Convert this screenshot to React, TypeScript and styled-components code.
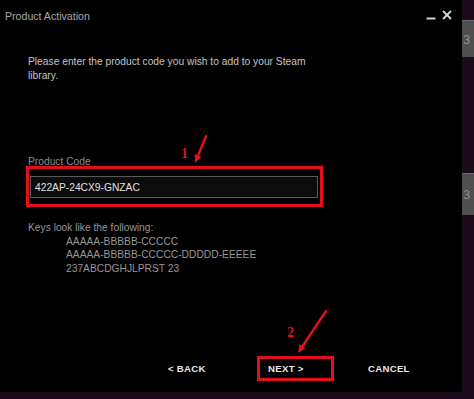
import React from "react";
import styled, { createGlobalStyle } from "styled-components";

const Global = createGlobalStyle`
  html, body { margin: 0; padding: 0; background: #1b0b1b; }
  body { font-family: "Liberation Sans", Arial, sans-serif; }
`;

const Page = styled.div`
  width: 474px;
  height: 399px;
  display: flex;
  align-items: flex-start;
  background: #1b0b1b;
  overflow: hidden;
`;

const Dialog = styled.div`
  position: relative;
  width: 462px;
  height: 392px;
  background: #000;
  display: flex;
  flex-direction: column;
  box-sizing: border-box;
`;

const TitleBar = styled.div`
  height: 32px;
  display: flex;
  align-items: center;
  justify-content: space-between;
  padding: 0 10px 0 5px;
`;

const Title = styled.span`
  font-size: 10.6px;
  color: #a8a8a8;
  margin-top: -1px;
`;

const Controls = styled.div`
  display: flex;
  align-items: flex-end;
  gap: 6px;
  margin-top: -2px;
`;

const Content = styled.div`
  flex: 1;
  display: flex;
  flex-direction: column;
  padding: 23px 0 0 28px;
`;

const Description = styled.p`
  margin: 0;
  width: 300px;
  font-size: 10.25px;
  line-height: 14px;
  color: #c4c4c4;
`;

const Label = styled.div`
  margin-top: 73px;
  font-size: 10.25px;
  line-height: 11px;
  color: #8c8c8c;
`;

const Highlight = styled.div`
  margin: -1px 0 0 -2px;
  width: 297px;
  box-sizing: border-box;
  border: 3px solid #e3101c;
  padding: 7px 2px 6px 1px;
`;

const CodeInput = styled.div`
  height: 22px;
  box-sizing: border-box;
  border: 1px solid #5a5a5a;
  background: #0c0c0c;
  display: flex;
  align-items: center;
  padding-left: 4px;
  font-size: 10.25px;
  color: #e0e0e0;
`;

const Keys = styled.div`
  margin-top: 14px;
  font-size: 10.25px;
  line-height: 13.5px;
  color: #979797;
`;

const KeyLine = styled.div<{ $indent?: boolean }>`
  padding-left: ${(p) => (p.$indent ? "38px" : "0")};
`;

const ButtonRow = styled.div`
  display: flex;
  gap: 23px;
  padding: 0 0 11px 157px;
`;

const Button = styled.div<{ $marked?: boolean }>`
  width: 77px;
  height: 25px;
  box-sizing: border-box;
  border: 3px solid ${(p) => (p.$marked ? "#e3101c" : "transparent")};
  display: flex;
  align-items: center;
  padding-left: 8px;
  font-size: 9.6px;
  font-weight: bold;
  letter-spacing: 0.3px;
  color: #e6e6e6;
`;

const SideStrip = styled.div`
  width: 12px;
  height: 399px;
  display: flex;
  flex-direction: column;
`;

const Tab = styled.div<{ $top: number; $h: number }>`
  margin-top: ${(p) => p.$top}px;
  height: ${(p) => p.$h}px;
  background: #4f4f4f;
  border-top: 1px solid #6a6a6a;
  box-sizing: border-box;
  display: flex;
  align-items: center;
  padding-left: 1px;
  font-size: 13px;
  color: #8e8e8e;
  overflow: hidden;
`;

const Annotation = styled.span<{ $x: number; $y: number }>`
  position: absolute;
  left: ${(p) => p.$x}px;
  top: ${(p) => p.$y}px;
  font-family: "Liberation Serif", "Times New Roman", serif;
  font-weight: bold;
  font-size: 14px;
  line-height: 14px;
  color: #e3101c;
`;

const Overlay = styled.svg`
  position: absolute;
  left: 0;
  top: 0;
  pointer-events: none;
`;

const Arrow = ({ x1, y1, x2, y2 }: { x1: number; y1: number; x2: number; y2: number }) => {
  const ang = Math.atan2(y2 - y1, x2 - x1);
  const len = 9;
  const spread = 0.42;
  const ax = x2 - len * Math.cos(ang - spread);
  const ay = y2 - len * Math.sin(ang - spread);
  const bx = x2 - len * Math.cos(ang + spread);
  const by = y2 - len * Math.sin(ang + spread);
  const sx = x2 - 6 * Math.cos(ang);
  const sy = y2 - 6 * Math.sin(ang);
  return (
    <g>
      <line x1={x1} y1={y1} x2={sx} y2={sy} stroke="#e3101c" strokeWidth={2.4} strokeLinecap="round" />
      <polygon points={`${x2},${y2} ${ax},${ay} ${bx},${by}`} fill="#e3101c" />
    </g>
  );
};

export default function App() {
  return (
    <>
      <Global />
      <Page>
        <Dialog>
          <TitleBar>
            <Title>Product Activation</Title>
            <Controls>
              <svg width="10" height="10" viewBox="0 0 10 10">
                <rect x="0.5" y="7.5" width="9" height="2" fill="#cfcfcf" />
              </svg>
              <svg width="10" height="10" viewBox="0 0 10 10">
                <path d="M1 1 L9 9 M9 1 L1 9" stroke="#d6d6d6" strokeWidth="1.8" />
              </svg>
            </Controls>
          </TitleBar>
          <Content>
            <Description>
              Please enter the product code you wish to add to your Steam library.
            </Description>
            <Label>Product Code</Label>
            <Highlight>
              <CodeInput>422AP-24CX9-GNZAC</CodeInput>
            </Highlight>
            <Keys>
              <KeyLine>Keys look like the following:</KeyLine>
              <KeyLine $indent>AAAAA-BBBBB-CCCCC</KeyLine>
              <KeyLine $indent>AAAAA-BBBBB-CCCCC-DDDDD-EEEEE</KeyLine>
              <KeyLine $indent>237ABCDGHJLPRST 23</KeyLine>
            </Keys>
          </Content>
          <ButtonRow>
            <Button>&lt; BACK</Button>
            <Button $marked>NEXT &gt;</Button>
            <Button>CANCEL</Button>
          </ButtonRow>
          <Annotation $x={181} $y={147}>1</Annotation>
          <Annotation $x={287} $y={326}>2</Annotation>
          <Overlay width="462" height="392">
            <Arrow x1={206} y1={136} x2={195} y2={163} />
            <Arrow x1={326} y1={311} x2={298} y2={353} />
          </Overlay>
        </Dialog>
        <SideStrip>
          <Tab $top={20} $h={37}>3</Tab>
          <Tab $top={116} $h={42}>3</Tab>
        </SideStrip>
      </Page>
    </>
  );
}
